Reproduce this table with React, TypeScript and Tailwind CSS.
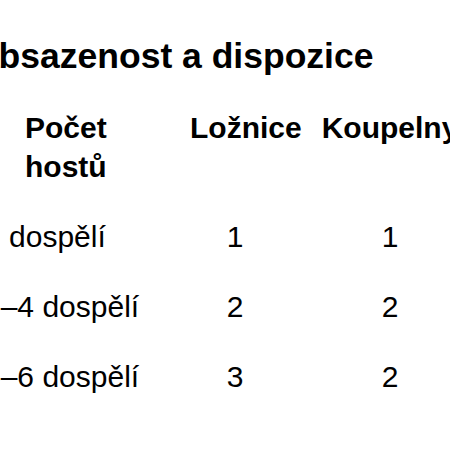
import React from 'react';

const rows = [
  { guests: '2 dospělí', bedrooms: 1, bathrooms: 1 },
  { guests: '3–4 dospělí', bedrooms: 2, bathrooms: 2 },
  { guests: '5–6 dospělí', bedrooms: 3, bathrooms: 2 },
];

export default function App() {
  return (
    <div className="w-[450px] h-[450px] overflow-hidden bg-white text-black font-['Liberation_Sans',Arial,sans-serif]">
      <div className="ml-[-29px] pt-[36px]">
        <h3 className="text-[35.5px] leading-[40px] font-bold whitespace-nowrap">Obsazenost a dispozice</h3>

        {/* Occupancy table */}
        <div className="mt-[32px] ml-[13px] grid grid-cols-[176px_150px_160px] gap-y-[31px] text-[30px] leading-[39px]">
          <div className="pl-[41px] font-bold">Počet hostů</div>
          <div className="pl-[30px] font-bold whitespace-nowrap">Ložnice</div>
          <div className="text-center font-bold whitespace-nowrap">Koupelny</div>

          {rows.map(r => (
            <React.Fragment key={r.guests}>
              <div className="whitespace-nowrap">{r.guests}</div>
              <div className="text-center">{r.bedrooms}</div>
              <div className="text-center">{r.bathrooms}</div>
            </React.Fragment>
          ))}
        </div>
      </div>
    </div>
  );
}
